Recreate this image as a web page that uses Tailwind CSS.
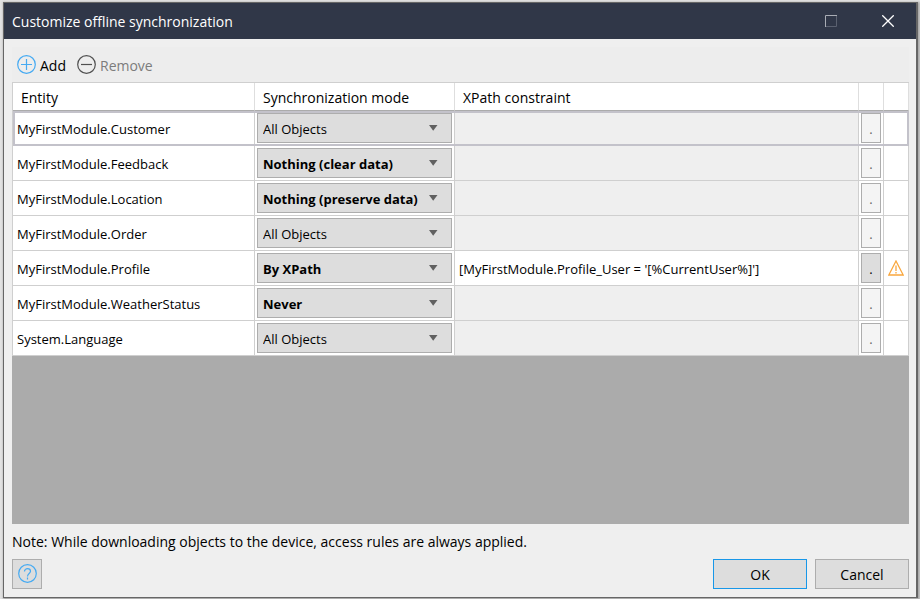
<!DOCTYPE html>
<html lang="en">
<head>
<meta charset="utf-8">
<title>Customize offline synchronization</title>
<script src="https://cdn.jsdelivr.net/npm/@tailwindcss/browser@4"></script>
</head>
<body class="h-screen bg-[#e2e2e2] pt-[2px] pr-[2px] pb-px pl-[3px] font-['Open_Sans','Noto_Sans',sans-serif] text-sm text-black">
<main class="flex h-full flex-col border-t border-r-2 border-b border-l border-[#666] bg-[#efefef] shadow-[1px_1px_2px_1px_#aaa]">
  <header class="flex h-9 shrink-0 items-center bg-[#303748] pl-2 text-white">
    <h1 class="flex-1 pt-0.5">Customize offline synchronization</h1>
    <button aria-label="Maximize" class="flex h-full w-[58px] items-center justify-center"><svg width="12" height="12" fill="none"><path d="M11.5.5v11H.5" stroke="#5b6170"/><path d="M.5 12V.5H12" stroke="#a9adb5"/></svg></button>
    <button aria-label="Close" class="flex h-full w-14 items-center justify-center"><svg width="12" height="12" stroke="#fff" stroke-width="1.3"><path d="M.3.3l11.4 11.4M11.7.3L.3 11.7"/></svg></button>
  </header>
  <div class="flex min-h-0 flex-1 flex-col pt-2 pr-[7px] pb-2 pl-2">
    <div class="flex h-[35px] shrink-0 items-center gap-2.5 bg-[#ededed] pl-1">
      <button class="flex items-center gap-1"><svg width="20" height="20" fill="none" stroke="#45aaf2" stroke-width="1.2"><circle cx="10.500" cy="9.500" r="8.8"/><path d="M10.500 4v11M5 9.500h11"/></svg><span class="pt-0.5">Add</span></button>
      <button class="flex items-center gap-1 text-[#7c7c7c]"><svg width="20" height="20" fill="none" stroke="#505050" stroke-width="1.2"><circle cx="10.500" cy="9.500" r="8.8"/><path d="M5 9.500h11"/></svg><span class="pt-0.5">Remove</span></button>
    </div>
    <div class="min-h-0 flex-1 bg-[#ababab]">
      <table class="w-full table-fixed border-separate border-spacing-0 border-t border-l border-[#cfcfcf] bg-white text-[13px]">
        <colgroup><col class="w-[242px]"><col class="w-[200px]"><col><col class="w-[25px]"><col class="w-[25px]"></colgroup>
        <thead>
          <tr class="h-7 text-left text-sm [&>th]:border-r [&>th]:border-b [&>th]:border-r-[#dedede] [&>th]:border-b-[#ababab] [&>th]:px-2 [&>th]:pt-0.5 [&>th]:pb-0 [&>th]:font-normal">
            <th>Entity</th><th>Synchronization mode</th><th>XPath constraint</th><th aria-label="Edit"></th><th aria-label="Status"></th>
          </tr>
        </thead>
        <tbody id="rows"></tbody>
      </table>
    </div>
    <p class="mt-2 h-5 shrink-0 leading-5">Note: While downloading objects to the device, access rules are always applied.</p>
    <footer class="mt-[7px] flex h-[30px] shrink-0 gap-2">
      <button aria-label="Help" class="flex w-[30px] items-center justify-center border border-[#adadad] bg-[#ddd]"><svg width="20" height="20" fill="none" stroke="#45aaf2" stroke-width="1.2"><circle cx="10.500" cy="9.500" r="8.800"/><path d="M7.500 7.500c0-3.800 6-3.600 6-.2 0 2.300-3 2.300-3 5.200M10.500 13.500v2"/></svg></button>
      <button class="ml-auto w-[94px] border border-[#1897e8] bg-[#ddd] pt-0.5">OK</button>
      <button class="w-[94px] border border-[#adadad] bg-[#ddd] pt-0.5">Cancel</button>
    </footer>
  </div>
</main>
<template id="row">
  <tr class="h-[35px] [&>td]:border-r [&>td]:border-b [&>td]:border-[#cfcfcf] [&>td]:pb-0">
    <td class="px-1 pt-0.5"></td>
    <td class="px-0.5 pt-0"><div class="relative"><select class="block h-[30px] w-full appearance-none rounded-none border border-[#adadad] bg-[#ddd] pt-0.5 pl-[5px]"><option></option></select><svg class="pointer-events-none absolute top-3 right-3.5" width="9" height="6" fill="#606060"><path d="M0 0h8.500L4.200 5.800z"/></svg></div></td>
    <td class="p-0"><input class="block h-[34px] w-full bg-white px-1 pt-0.5 disabled:bg-[#efefef]"></td>
    <td class="px-0.5 pt-0"><button class="block h-[30px] w-5 border border-[#adadad] bg-[#ddd] pt-0.5 text-center disabled:bg-[#f4f4f4] disabled:text-[#666]" aria-label="Edit constraint">.</button></td>
    <td></td>
  </tr>
</template>
<template id="warning"><svg class="mx-auto" width="16" height="16" fill="none" stroke="#f9a73e" stroke-width="1.300" role="img" aria-label="Warning"><path d="M8 1L15.200 15H.8zM8 5.500v5.500M8 12v1.500"/></svg></template>
<script>
const data = [
  ["MyFirstModule.Customer", "All Objects"],
  ["MyFirstModule.Feedback", "Nothing (clear data)"],
  ["MyFirstModule.Location", "Nothing (preserve data)"],
  ["MyFirstModule.Order", "All Objects"],
  ["MyFirstModule.Profile", "By XPath", "[MyFirstModule.Profile_User = '[%CurrentUser%]']"],
  ["MyFirstModule.WeatherStatus", "Never"],
  ["System.Language", "All Objects"]
];
data.forEach(([entity, mode, xpath], i) => {
  const tr = document.getElementById("row").content.firstElementChild.cloneNode(true);
  const select = tr.querySelector("select"), input = tr.querySelector("input");
  tr.cells[0].textContent = entity;
  select.setAttribute("aria-label", "Synchronization mode for " + entity);
  select.options[0].textContent = mode;
  if (mode !== "All Objects") select.classList.add("font-bold");
  input.setAttribute("aria-label", "XPath constraint for " + entity);
  input.value = xpath || "";
  input.disabled = tr.querySelector("button").disabled = !xpath;
  if (xpath) tr.cells[4].append(document.getElementById("warning").content.cloneNode(true));
  if (i === 0) tr.classList.add("outline-2", "-outline-offset-2", "outline-[#c3c2ca]");
  document.getElementById("rows").append(tr);
});
</script>
</body>
</html>
